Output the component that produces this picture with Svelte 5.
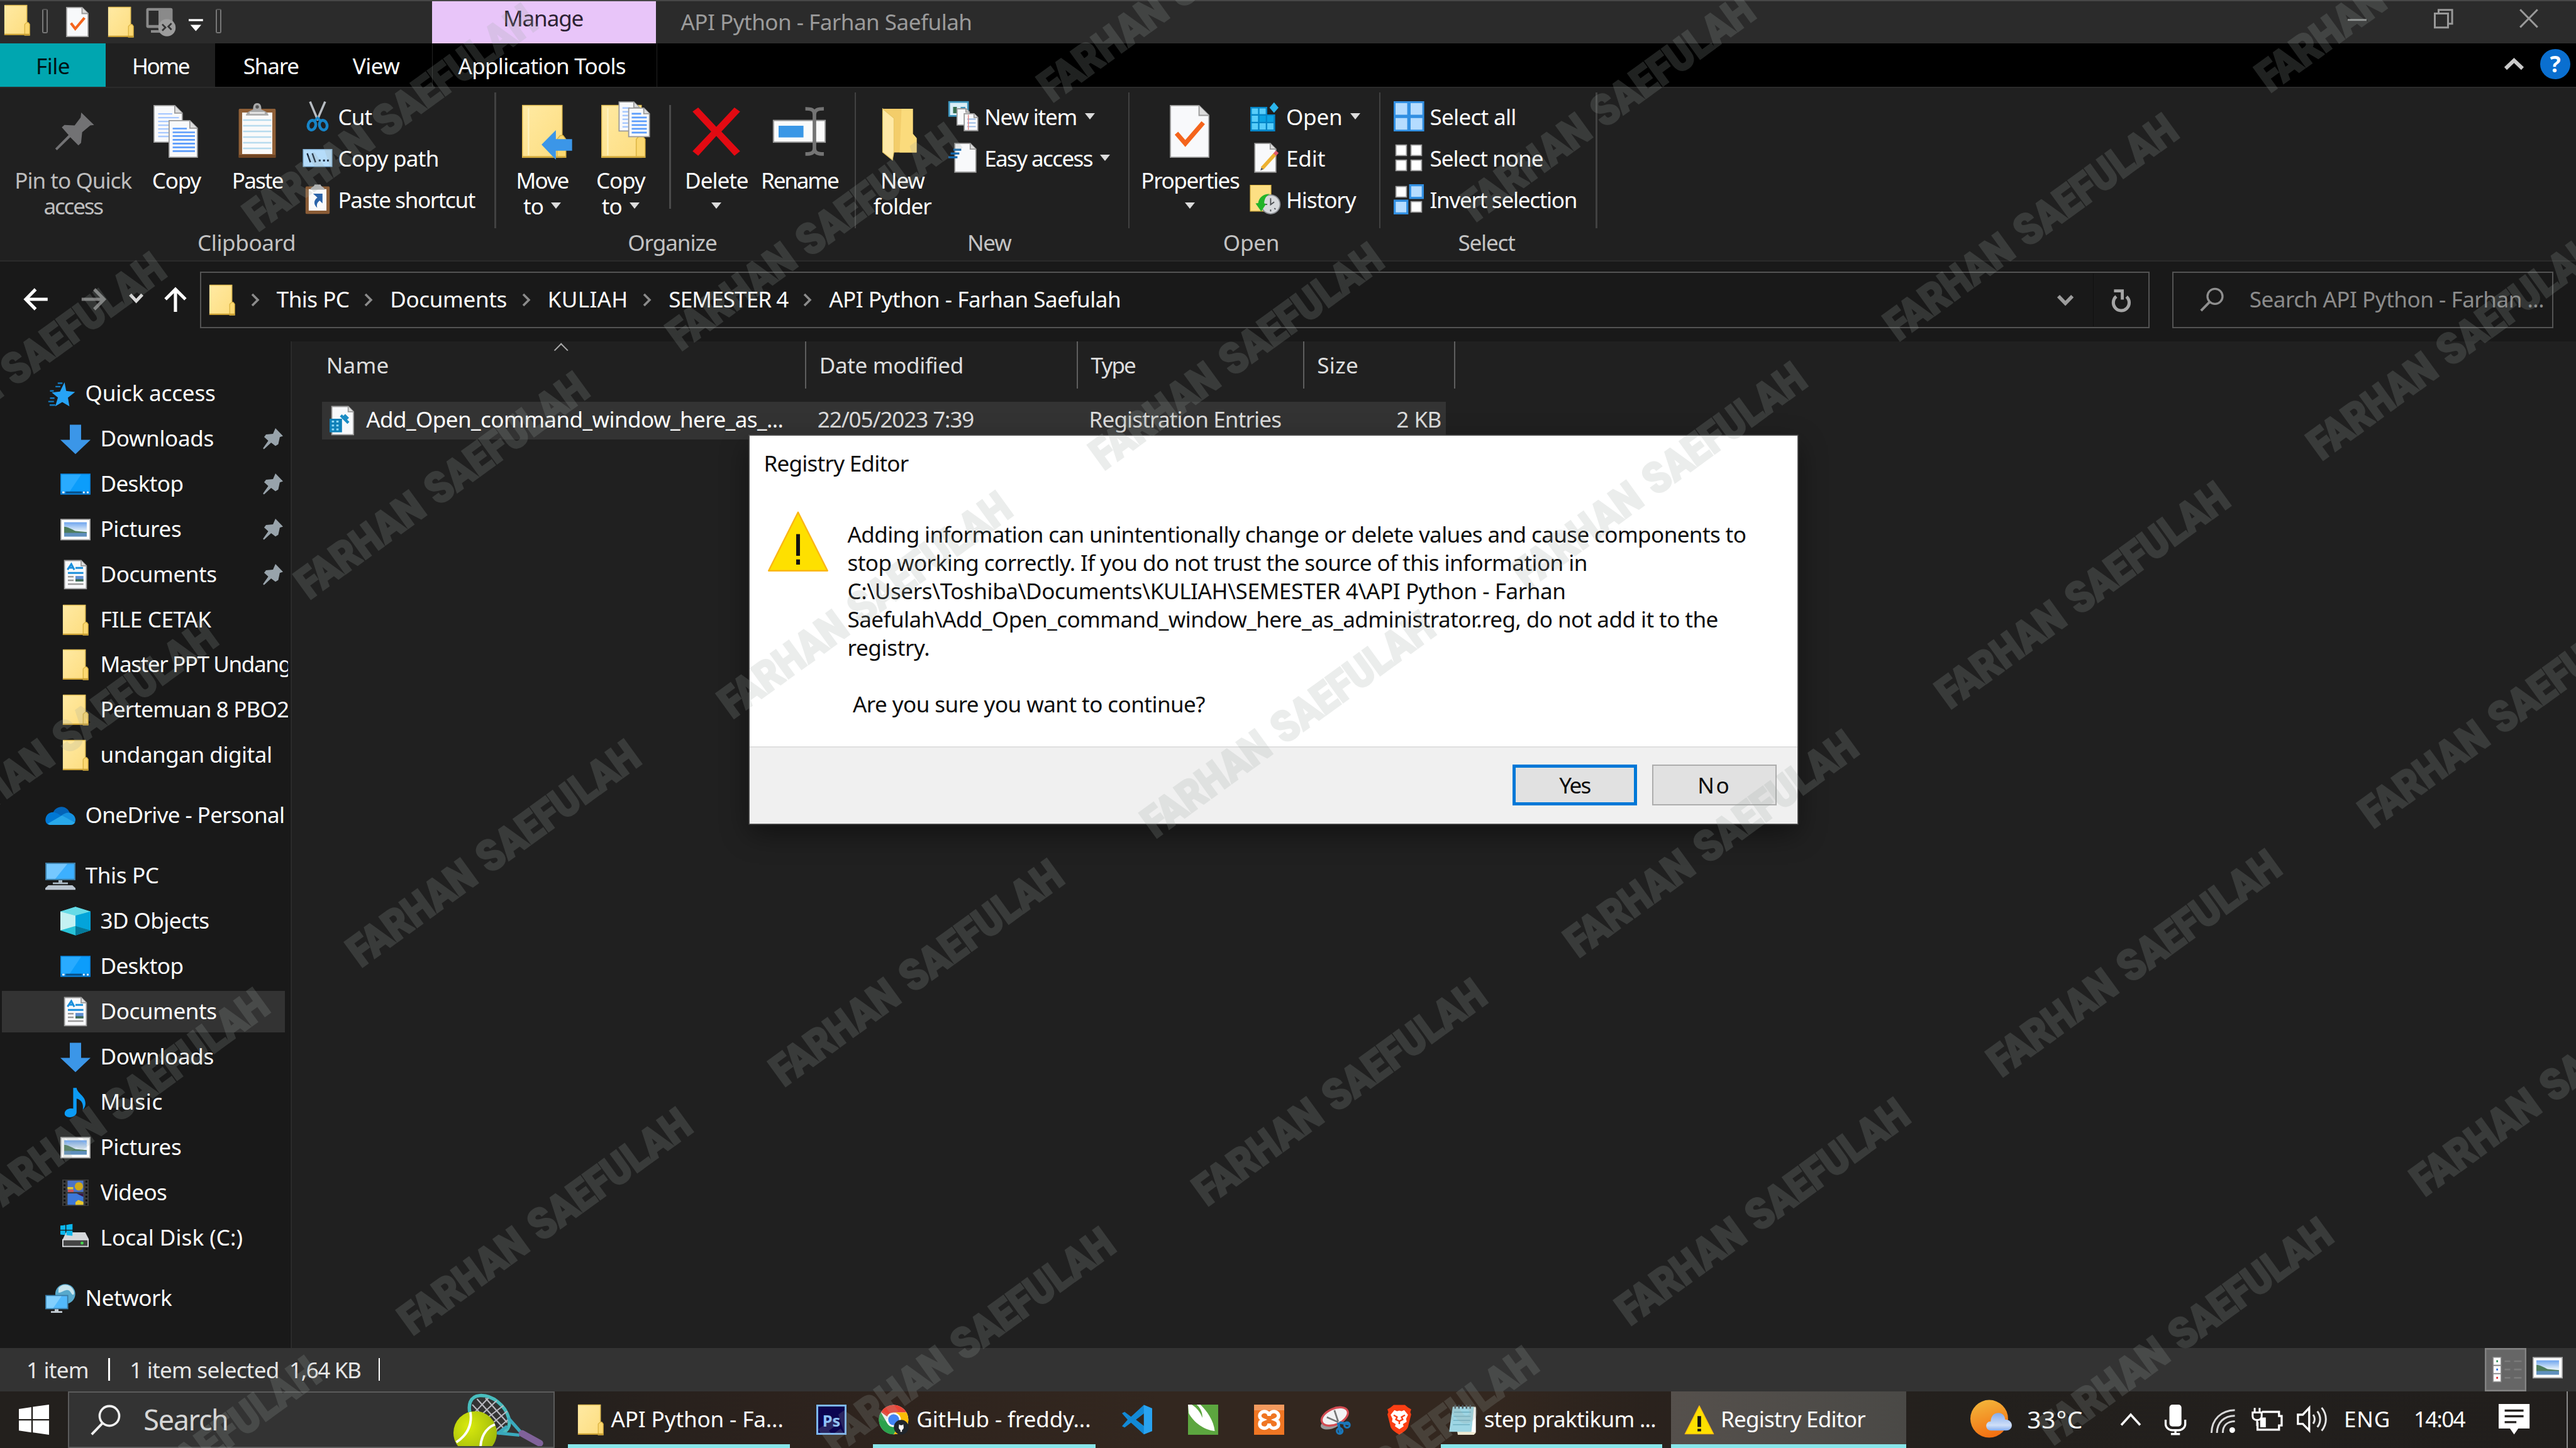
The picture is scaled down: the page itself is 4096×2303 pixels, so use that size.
<script lang="ts">
  const FONT = '"Noto Sans"';
  const ctx = document.createElement('canvas').getContext('2d')!;

  // Tracking (in em) that makes the ink of a text span the given width.
  function track(text: string, width: number, size: number) {
    ctx.font = `100px ${FONT}`;
    const m = ctx.measureText(text);
    const ink = (m.actualBoundingBoxLeft + m.actualBoundingBoxRight) / 100;
    return `${((width / size - ink) / Math.max(1, text.length - 1)).toFixed(4)}em`;
  }

  type Node = { icon: string; label: string; w: number; pin?: boolean; root?: boolean; gap?: boolean; on?: boolean };
  const tree: Node[] = [
    { icon: 'star', label: 'Quick access', w: 68, root: true },
    { icon: 'down', label: 'Downloads', w: 58.8, pin: true },
    { icon: 'desktop', label: 'Desktop', w: 42.5, pin: true },
    { icon: 'picture', label: 'Pictures', w: 41.6, pin: true },
    { icon: 'document', label: 'Documents', w: 60.4, pin: true },
    { icon: 'folder', label: 'FILE CETAK', w: 57.8 },
    { icon: 'folder', label: 'Master PPT Undangan', w: 112.5 },
    { icon: 'folder', label: 'Pertemuan 8 PBO2', w: 98.6 },
    { icon: 'folder', label: 'undangan digital', w: 89.5 },
    { icon: 'onedrive', label: 'OneDrive - Personal', w: 104.3, root: true, gap: true },
    { icon: 'pc', label: 'This PC', w: 38.8, root: true, gap: true },
    { icon: 'cube', label: '3D Objects', w: 57 },
    { icon: 'desktop', label: 'Desktop', w: 42.5 },
    { icon: 'document', label: 'Documents', w: 60.4, on: true },
    { icon: 'down', label: 'Downloads', w: 58.8 },
    { icon: 'music', label: 'Music', w: 31.6 },
    { icon: 'picture', label: 'Pictures', w: 41.6 },
    { icon: 'video', label: 'Videos', w: 35 },
    { icon: 'disk', label: 'Local Disk (C:)', w: 74 },
    { icon: 'network', label: 'Network', w: 45, root: true, gap: true },
  ];

  const crumbs: [string, number][] = [
    ['This PC', 38.4],
    ['Documents', 60.6],
    ['KULIAH', 40.4],
    ['SEMESTER 4', 63],
    ['API Python - Farhan Saefulah', 154],
  ];

  const message: [string, number][] = [
    ['Adding information can unintentionally change or delete values and cause components to', 476.2],
    ['stop working correctly. If you do not trust the source of this information in', 391],
    ['C:\\Users\\Toshiba\\Documents\\KULIAH\\SEMESTER 4\\API Python - Farhan', 379.4],
    ['Saefulah\\Add_Open_command_window_here_as_administrator.reg, do not add it to the', 460.8],
    ['registry.', 42],
  ];

  // Lattice of the diagonal watermark.
  const marks: { x: number; y: number }[] = [];
  for (let i = -3; i <= 9; i++) {
    for (let j = -3; j <= 10; j++) {
      const x = 573 + i * 821 + j * 114;
      const y = 513 - i * 549.5 + j * 813.5;
      if (x > -750 && x < 5750 && y > -100 && y < 3800) marks.push({ x, y });
    }
  }
</script>

{#snippet t(text: string, w: number, size = 11.7, cls = '')}
  <span class="t {cls}" style:font-size="{size}px" style:letter-spacing={track(text, w, size)}>{text}</span>
{/snippet}

{#snippet page(x: number, y: number, w: number, h: number, f: number)}
  <path d="M{x} {y}h{w - f}l{f} {f}v{h - f}h{-w}z" fill="#f8f9fb" stroke="#9a9a9a" stroke-width=".6" />
  <path d="M{x + w - f} {y}v{f}h{f}" fill="#dcdcdc" stroke="#9a9a9a" stroke-width=".6" />
{/snippet}

{#snippet folder(w: number, h: number)}
  <rect x="0" y="0" width={w - 1.3} height={h} fill="url(#fold)" />
  <path d="M.2 .2H{w - 1.5}V{h * 0.56}" fill="none" stroke="#e3bf55" stroke-width=".5" />
  <path d="M{w - 2.6} {h}v{-h * 0.36}l1 -{h * 0.06}h.9l.7 {h * 0.06}v{h * 0.36}z" fill="#fbd871" stroke="#dcb443" stroke-width=".45" />
  <path d="M0 {h - 0.35}H{w}" stroke="#c99f33" stroke-width=".7" />
{/snippet}

{#snippet ico(name: string, w = 16, h = 16)}
  <svg class="ico" width={w} height={h} viewBox="0 0 {w} {h}">
    {#if name === 'folder'}
      <g transform="translate({(w - 13.4) / 2} {(h - 16) / 2})">{@render folder(13.4, 16)}</g>
    {:else if name === 'star'}
      <path d="M10.2 2l.9 4.600 4.700.6-3.800 3 .8 4.600-3.800-2.300-3.700 2.300 1.400-4.700-3.300-2.700 4.400-.5z" fill="#27a3f5" />
      <path d="M6.600 2.500h2.500M5.400 4.300h2.600M2.500 6.600h2M2.500 10.400h2.400M1.600 12.200h3M2.300 14.100h3" stroke="#1479bd" stroke-width=".8" />
    {:else if name === 'down'}
      <path d="M5 .5h6v8h5l-8 7.6L0 8.5h5z" fill="#3b96e8" />
    {:else if name === 'desktop'}
      <rect x="0" y="2.4" width="16" height="11.2" fill="#0b7fd6" />
      <rect x=".5" y="2.9" width="15" height="8.9" fill="#0c9dfb" />
      <path d="M.5 2.9h10.5L5 11.8H.5z" fill="#29abff" />
      <path d="M1 12.4h1.2M12 12.4h.9M14 12.4h1" stroke="#fff" stroke-width=".9" />
      <path d="M3 12.4h8.4" stroke="#064f88" stroke-width=".9" />
    {:else if name === 'picture'}
      <rect x=".3" y="2.7" width="15.4" height="10.8" fill="#fdfdfd" stroke="#a5a5a5" stroke-width=".6" />
      <rect x="2" y="4.2" width="12" height="7.6" fill="url(#sky)" />
      <path d="M2 6.6c2 .1 4 1.4 6 2.2l6 .6v.6H2z" fill="#4e7c5c" />
      <path d="M2 9.8h12v2H2z" fill="#5f8fbd" />
    {:else if name === 'document'}
      {@render page(2.2, 0.5, 11.6, 15, 2.8)}
      <path d="M3.8 5.4l2-3 1.6 3M4.5 4.3h2.3M8 4.4h4M4 7.1h8.2" stroke="#1b8fdc" stroke-width="1" fill="none" />
      <path d="M4 9.1h3M4 11h3M4 13h8.2" stroke="#9b9b9b" stroke-width=".8" />
      <rect x="8" y="8.7" width="4.2" height="2.8" fill="#5e8fd1" />
      <rect x="8" y="10.4" width="4.2" height="1.2" fill="#3f6b55" />
    {:else if name === 'onedrive'}
      <path d="M4.2 6.5C5.3 3.4 9.4 2.3 12 4.9l1 1.6-4 4-5.5-3z" fill="#0364b8" />
      <path d="M.1 10.3c0-2.5 2.1-4.4 4.7-4 1 .2 2.2.8 4 2L2.4 13C1 12.8.1 11.800.1 10.300z" fill="#0078d4" />
      <path d="M8.400 8.200c2-1.700 4-2 5.200-1.400C15.200 7.500 16 9 16 10.200c0 .6-.1 1-.3 1.500z" fill="#1490df" />
      <path d="M1.300 12.300L8.800 8l7 3.700c-.5.900-1.300 1.300-2.400 1.300H3c-.8 0-1.300-.3-1.700-.7z" fill="#28a8ea" />
    {:else if name === 'pc'}
      <rect x="0" y="1" width="16" height="9.300" fill="#3e7fa8" />
      <rect x=".7" y="1.700" width="14.600" height="7.900" fill="#3cb0ff" />
      <path d="M.7 1.700h11L5.300 9.600H.7z" fill="#76c8ff" />
      <path d="M7 10.300h2v1.200h3v.9H4v-.9h3z" fill="#a9b7c2" />
      <path d="M1.600 13h12.800l1.600 1.500v.9H0v-.9z" fill="#b9c4cf" />
    {:else if name === 'cube'}
      <path d="M8 .4l8 2.500v10L8 15.600 0 12.900v-10z" fill="#29c3d8" />
      <path d="M0 2.900l8-2.500 8 2.500-8 2.200z" fill="#67dbe6" />
      <path d="M0 2.900l8 2.200v5.500l-8 2.300z" fill="#c4f1f2" />
      <path d="M8 5.100l8-2.200v10l-8-2.300z" fill="#03a4da" />
      <path d="M8 10.600l8 2.300-8 2.700z" fill="#04799b" />
    {:else if name === 'music'}
      <path d="M6.800.4h1.800c.4 3 4.800 4.200 4.700 8.300 0 1.200-.5 2.400-1.400 3.400.4-2.800-.3-5.200-3.300-6v7c0 1.800-1.600 2.900-3.600 2.900-1.700 0-3-.9-2.700-2.400.3-1.700 2.300-2.600 4.500-2.200z" fill="#0c9bf5" />
    {:else if name === 'video'}
      <rect x="1" y="1" width="14" height="14" fill="#3c3c3c" />
      <path d="M2.200 1.600v13M13.800 1.600v13" stroke="#0f0f0f" stroke-width="1" stroke-dasharray="1 1" />
      <rect x="3.800" y="1.600" width="8.400" height="6" fill="#4c74c8" />
      <rect x="3.800" y="8.400" width="8.400" height="6" fill="#3d78d8" />
      <circle cx="9.800" cy="4.600" r="2.200" fill="#d0a91b" />
      <path d="M3.800 5h3v1.200h-3zM8 13l1.500-1.200 2.700 1v1.600H8z" fill="#e8c72c" />
      <path d="M4 6.400h3v1.200H4z" fill="#d9544d" />
      <path d="M8.600 8.400h3.600v1.800z" fill="#3a1640" />
    {:else if name === 'disk'}
      <path d="M0 1.500l2.600-.3v2.400H0zM3.200 1.100L6.400.6v3H3.200zM0 4.200h2.600v2.200L0 6.100zM3.200 4.200h3.200v3L3.200 6.700z" fill="#0cb7ee" />
      <path d="M3 5h10.200l2 3.800H1.200z" fill="#d5d7da" />
      <path d="M0 1.500l2.600-.3v2.400H0zM3.200 1.100L6.400.6v3H3.200zM0 4.200h2.600v2.200L0 6.100zM3.200 4.200h3.200v2.600L3.200 6.500z" fill="#0cb7ee" />
      <rect x="1" y="8.600" width="14" height="4.200" fill="#e1e3e6" />
      <rect x="1.600" y="9.200" width="12.800" height="3" fill="#444" />
      <circle cx="11.500" cy="10.700" r=".8" fill="#45d64a" />
    {:else if name === 'network'}
      <circle cx="10.600" cy="5.700" r="5.300" fill="#58a9cc" />
      <path d="M7 2.600c2-2.400 6-2.600 8 1.200.6 1.400.2 2.600-.6 2.200-1-1-1.400-2.600-3-2.400-2 .3-2.800 1.500-4.400 1.400z" fill="#c8e5ee" />
      <rect x="0" y="6.200" width="12.200" height="7.600" fill="#3a7ca6" />
      <rect x=".6" y="6.800" width="11" height="6.400" fill="#52b9fb" />
      <path d="M.6 6.800h8l-4.400 6.400H.6z" fill="#82cffd" />
      <path d="M5 13.800h2v1h2v.9H3v-.9h2z" fill="#c3ccd3" />
    {:else if name === 'pin'}
      <path d="M7 .3l4 4.200-1.700.6-.8 3.700-1.500 1L4.700 8 .9 11.500.4 11l2.800-4L1 5l1-1.300 3.700-.4z" fill="#98a3ab" />
    {:else if name === 'props'}
      {@render page(0.300, 0.300, 11.400, 15.400, 3.200)}
      <path d="M2.600 8.600l2.300 3 4.900-5.800" fill="none" stroke="#f4641c" stroke-width="1.400" />
    {:else if name === 'rdp'}
      <rect x=".5" y=".6" width="14" height="10.600" rx="1" fill="#8a8a8a" />
      <rect x="1.800" y="2" width="5.200" height="7.600" fill="#2b2b2b" />
      <path d="M3 13h7" stroke="#8a8a8a" stroke-width="1.400" />
      <circle cx="11.500" cy="11" r="4.600" fill="#9c9c9c" />
      <path d="M9 9.200l1.700 1.700L9 12.600M13.900 8.700l-1.700 1.700 1.700 1.700" fill="none" stroke="#333" stroke-width=".9" />
    {:else if name === 'bigpin'}
      <path d="M20.400 6l6.800 6.600-2 .2-4.300 3.600-.6 5.700-1.400 1.300-4.300-4.300-7.100 6.900-.9-.9 7.100-7.200-3.600-4.100 1.400-1.200 5.400.2 3.200-4.200z" fill="#727274" />
    {:else if name === 'copy'}
      {@render page(4.300, 2.300, 15, 19.400, 4)}
      <path d="M6.500 6.700h7.500M6.500 8.700h11M6.500 10.700h6M6.500 12.700h6M6.500 14.700h6M6.500 16.700h6M6.500 18.700h6" stroke="#a8c9ff" stroke-width=".8" />
      {@render page(12.300, 10.300, 15, 19.400, 4)}
      <path d="M14.200 14.500h7.500M14.200 16.500h11.800M14.200 18.500h11.800M14.200 20.500h11.800M14.200 22.500h11.800M14.200 24.500h11.800M14.200 26.500h11.800" stroke="#5c9dfc" stroke-width=".9" />
    {:else if name === 'paste'}
      <rect x="6.200" y="4" width="19.600" height="26" rx=".6" fill="#8f5f37" />
      <path d="M6.200 28.400h19.600v1.600H6.200z" fill="#6f4524" />
      <rect x="8" y="6" width="16" height="22" fill="#fafafa" />
      <path d="M8.500 10h15M8.500 13h15M8.500 16h15M8.500 19h15M8.500 22h15M8.500 25h15" stroke="#b7dbee" stroke-width=".8" />
      <path d="M10 7.600c.2-1.800 1.600-2.200 3.800-3.200 0-1.400.2-3.400 2.200-3.400s2.200 2 2.200 3.400c2.200 1 3.600 1.400 3.800 3.200z" fill="#a9a9a9" />
      <path d="M12 6.200h8" stroke="#e4e4e4" stroke-width="1" />
      <circle cx="16" cy="3" r=".9" fill="#555" />
    {:else if name === 'cut'}
      <path d="M4 .2l4.200 10M12 .2L7.800 10" stroke="#b7bcc2" stroke-width="1.200" />
      <ellipse cx="5" cy="12.700" rx="2" ry="2.600" fill="none" stroke="#1784c7" stroke-width="1.500" transform="rotate(15 5 12.700)" />
      <ellipse cx="11" cy="12.700" rx="2" ry="2.600" fill="none" stroke="#1784c7" stroke-width="1.500" transform="rotate(-15 11 12.700)" />
      <path d="M6.200 10.600L8 8.800l1.800 1.800" fill="none" stroke="#1784c7" stroke-width="1.300" />
    {:else if name === 'path'}
      <rect x=".4" y="3.600" width="15.200" height="9" fill="#b5dcfa" stroke="#8ab9de" stroke-width=".5" />
      <path d="M2.500 5.600l1.700 4.800M5.200 5.600l1.700 4.800" stroke="#15253a" stroke-width=".8" />
      <path d="M8.600 9.400h1M10.900 9.400h1M13 9.400h1" stroke="#15253a" stroke-width="1" />
    {:else if name === 'pasteshort'}
      <rect x="1.600" y="1.200" width="12.800" height="14.600" rx=".6" fill="#8a5c36" />
      <rect x="3.300" y="2.600" width="9.400" height="11.400" fill="#fafafa" />
      <path d="M4.200 2.900c.4-1.600 2-1.400 2.200-2.700h3.200c.2 1.300 1.800 1.100 2.200 2.700z" fill="#b5b5b5" />
      <path d="M5.600 5h5v5.200l-1.500-1.500c-1.500 1.200-1.700 2.200-1.300 3.800-2-1.600-2-4 .1-5.400z" fill="#2c64a9" />
    {:else if name === 'moveto' || name === 'copyto'}
      <g transform="translate(2.100 0)">
        <g transform="translate(3.500 2.200)">
          <rect width="21" height="27.600" fill="url(#fold)" stroke="#e3bf55" stroke-width=".5" />
          <path d="M3.200 1.500v25" stroke="#fff2bd" stroke-width=".8" />
          <path d="M18.300 27.600V18l1.700-2h1.500l1.500 2v9.600z" fill="#fbd871" stroke="#dcb443" stroke-width=".5" />
          <path d="M0 27.300h23" stroke="#d2a93c" stroke-width=".8" />
        </g>
        {#if name === 'moveto'}
          <path d="M13.600 23l7.600-7.700v4.800h8.600v6.200h-8.600V31z" fill="#3b96e8" />
        {:else}
          {@render page(12.700, 0.400, 10.800, 15.400, 3)}
          <path d="M14.500 3.600h4M14.500 5.600h4M14.500 7.600h3M14.500 9.600h3M14.500 11.600h3M14.500 13.600h3" stroke="#a8c9ff" stroke-width=".8" />
          {@render page(17.800, 3.600, 11, 15.200, 3)}
          <path d="M19.400 6.600h5M19.400 8.600h8M19.400 10.600h8M19.400 12.600h8M19.400 14.600h8M19.400 16.600h8" stroke="#5c9dfc" stroke-width=".9" />
        {/if}
      </g>
    {:else if name === 'delete'}
      <path d="M3.400 5.500l3-2.200L16 13.600l9.600-10.300 3 2.200-9.900 10.600 9.900 10.400-3 2.400L16 18.400 6.400 28.900l-3-2.400 9.900-10.400z" fill="#e20a12" />
    {:else if name === 'rename'}
      <rect x="2.300" y="10.200" width="27.400" height="11.500" fill="#fbfbfb" stroke="#9b9b9b" stroke-width=".7" />
      <rect x="5" y="13" width="13.200" height="6.200" fill="#3a97e6" />
      <path d="M19.200 4c3 0 4.800.4 4.800 3v18c0 2.600-1.800 3-4.800 3M29 4c-3 0-5 .4-5 3v18c0 2.600 2 3 5 3" fill="none" stroke="#747474" stroke-width="1.900" />
    {:else if name === 'newfolder'}
      <g transform="translate(-1.500 0)">
        <path d="M7 4h16v13.300l2 2.300v7.600H7z" fill="#f3cd6a" />
        <path d="M17 4h6v13.300l2 2.300v7.600h-9z" fill="#fbdb7c" />
        <path d="M7 4l6 5v17.500l-.8 4.700L7 27z" fill="#ffe9a6" stroke="#e9c766" stroke-width=".4" />
      </g>
    {:else if name === 'newitem'}
      <rect x=".4" y=".4" width="10" height="7.400" fill="#d9eef7" stroke="#3b94bd" stroke-width=".9" />
      <path d="M2.500 6.400V3h2v3.400z" fill="#376d50" />
      <path d="M6.500 3h2.500v2H6.500z" fill="#3b94bd" />
      {@render page(4.600, 4, 6.500, 8.600, 1.800)}
      {@render page(8.400, 6.600, 7.200, 9, 2)}
      <path d="M10 9.500h4.500M10 11.500h4.500M10 13.500h4.500" stroke="#97b9e4" stroke-width=".6" />
      <path d="M10.600 7.200v8" stroke="#e88c8c" stroke-width=".5" />
    {:else if name === 'easy'}
      {@render page(3.400, 0.400, 11.200, 15.200, 3)}
      <path d="M2.600 3.700h4.200M1.200 5.700h4.600M0 7.700h4.800" stroke="#1368ae" stroke-width="1.100" />
    {:else if name === 'bigprops'}
      <g transform="translate(-.8 0)">
        {@render page(5.800, 2.300, 20.400, 27.400, 5.200)}
        <path d="M9 17l4.700 5.400 9.500-11" fill="none" stroke="#f4641c" stroke-width="2.400" />
      </g>
    {:else if name === 'regedit'}
      <path d="M0 3h9v4h4.200v9H0z" fill="#0586c8" />
      <path d="M.8 3.800h3.300v3H.8zM4.900 3.800h3.300v3H4.900zM.8 7.700h3.300v3.200H.8zM.8 11.700h3.300v3.300H.8zM4.900 11.700h3.300v3.300H4.900zM9 11.700h3.300v3.300H9z" fill="#58cdfa" />
      <path d="M4.900 7.700h3.300v3.200H4.900zM9 7.700h3.300v3.200H9z" fill="#0aa2e2" />
      <path d="M12.600.6L15 3.400l-2.400 2.800-2.400-2.800z" fill="#2bb5ec" />
    {:else if name === 'edit'}
      {@render page(2.400, 0.400, 11.200, 15.200, 3)}
      <path d="M6.300 13.600L13.200 6" stroke="#edb131" stroke-width="1.900" />
      <path d="M13 6.300l1.300-1.500" stroke="#e0596b" stroke-width="2" />
      <path d="M5.400 14.800l.4-1.500 1.200.7z" fill="#555" />
    {:else if name === 'history'}
      <path d="M0 .5h11v13.800H0z" fill="#fddf83" stroke="#dcb443" stroke-width=".4" />
      <circle cx="10.800" cy="10.700" r="5" fill="#d6d9dc" stroke="#8b8f94" stroke-width=".6" />
      <path d="M10.800 7.400v3.400l1.900-1.400M8 10.700h1M12.800 12.700l.6.600M10.800 13.400v1" stroke="#4a4d51" stroke-width=".6" fill="none" />
      <path d="M10.400 5.200c-2.200 1-3 3-3 5l1 .2-2.600 4-3-4.200 1.400-.2c.4-3 3-5 6.200-4.800z" fill="#22b42a" />
    {:else if name === 'selall'}
      <rect width="16.200" height="16" fill="#318fe2" />
      <path d="M1 1h6.200v6.200H1zM9 1h6.200v6.200H9zM1 8.900h6.200v6.200H1zM9 8.900h6.200v6.200H9z" fill="#b5dcff" />
    {:else if name === 'selnone'}
      <path d="M1.200 1.200h5.600v5.600H1.200zM9.200 1.200h5.600v5.600H9.200zM1.200 9.200h5.600v5.600H1.200zM9.200 9.200h5.600v5.600H9.200z" fill="#fff" stroke="#9c9c9c" stroke-width=".6" />
    {:else if name === 'selinv'}
      <path d="M1.200 1.200h5.600v5.600H1.200zM9.200 9.200h5.600v5.600H9.200z" fill="#fff" stroke="#9c9c9c" stroke-width=".6" />
      <path d="M8.200 0h7.800v7.800H8.200zM0 8.200h7.800V16H0z" fill="#318fe2" />
      <path d="M9.300 1.100h5.600v5.600H9.300zM1.100 9.300h5.600v5.600H1.100z" fill="#b5dcff" />
    {:else if name === 'back'}
      <path d="M7.200 1.700L2 7l5.200 5.300M2 7h11.600" fill="none" stroke="#fff" stroke-width="1.700" />
    {:else if name === 'forward'}
      <path d="M8.300 1.700L13.500 7l-5.200 5.300M13.500 7H1.600" fill="none" stroke="#7b7b7b" stroke-width="1.700" />
    {:else if name === 'up'}
      <path d="M1.700 7L7 1.700 12.300 7M7 1.700v12" fill="none" stroke="#fff" stroke-width="1.700" />
    {:else if name === 'chevdown'}
      <path d="M1 1.500l3.200 3.400 3.200-3.400" fill="none" stroke="#d8d8d8" stroke-width="1.700" />
    {:else if name === 'addrchev'}
      <path d="M1 2l3.700 3.800L8.400 2" fill="none" stroke="#9c9c9c" stroke-width="1.900" />
    {:else if name === 'chevup'}
      <path d="M1 6l4.500-4.300L10 6" fill="none" stroke="#c9c9c9" stroke-width="2" />
    {:else if name === 'crumb'}
      <path d="M1 1l3 3-3 3" fill="none" stroke="#8b8b8b" stroke-width="1.200" />
    {:else if name === 'refresh'}
      <path d="M3 4.200A4.200 4.200 0 1 0 8.400 4.300" fill="none" stroke="#a5a5a5" stroke-width="1.700" />
      <path d="M1.800 1.200h4.400v4.600" fill="none" stroke="#a5a5a5" stroke-width="1.600" />
    {:else if name === 'glass'}
      <circle cx="8" cy="4.800" r="4" fill="none" stroke="#8f8f8f" stroke-width="1.100" />
      <path d="M5.200 7.700L.6 12.400" stroke="#8f8f8f" stroke-width="1.300" />
    {:else if name === 'regfile'}
      {@render page(2.200, 0.500, 11.500, 15, 2.800)}
      <rect x="1" y="7" width="6.600" height="7.200" fill="#0f80b8" />
      <path d="M2.200 8.500h1.200M4.600 8.500h1.200M2.200 10.600h1.200M4.600 10.600h1.200M2.200 12.700h1.200M4.600 12.700h1.200" stroke="#8fd8f6" stroke-width="1" />
      <path d="M7 5.200l4 4M8.800 5l2 2" stroke="#1b8cc4" stroke-width="1.500" />
    {:else if name === 'warn'}
      <path d="M{w / 2} .6L{w - 0.4} {h - 0.4}H.4z" fill="#fee000" stroke="#fbb615" stroke-width={w / 40} stroke-linejoin="round" />
      <path d="M{w / 2} {h * 0.38}v{h * 0.36}M{w / 2} {h * 0.8}v{h * 0.085}" stroke="#111" stroke-width={w > 20 ? 2 : 1.9} />
    {:else if name === 'win'}
      <path d="M0 2.300L6.600 1.300v6.400H0zM7.400 1.200L16 0v7.700H7.400zM0 8.400h6.600v6.400L0 13.800zM7.400 8.400H16V16l-8.600-1.200z" fill="#fff" />
    {:else if name === 'search'}
      <circle cx="10" cy="6" r="5.200" fill="none" stroke="#f0f0f0" stroke-width="1.200" />
      <path d="M6.300 9.900L.6 15.800" stroke="#f0f0f0" stroke-width="1.300" />
    {:else if name === 'tennis'}
      <path d="M9.500 13C7 6 9 1.500 14 1.200c7-.4 13.500 5.500 15.300 11.800 1.300 4.500-.8 8-5.300 8.200" fill="none" stroke="#48bcbd" stroke-width="1.800" />
      <path d="M10 6l13 14M12.500 3l15 16.500M17 2.500l11.500 13M10 11.500l8.500-9M11.500 14.500L23 3.800M16 14.500l10.500-8M20.500 16l8-6.500M22.500 19.500l7-6" stroke="#b9b9c0" stroke-width=".7" />
      <path d="M29 13l6.600 7.500M23 21l12 1.200M28.500 17.500l-4.800 3.700" stroke="#3aa9bd" stroke-width="1.700" fill="none" />
      <path d="M36.400 21.300l9.400 5.200" stroke="#80629a" stroke-width="3.600" stroke-linecap="round" />
      <circle cx="11.500" cy="21" r="11.500" fill="url(#ball)" />
      <path d="M9 10c1 6.500-1.500 12-7.500 16M22 16.500c-5 2-8 7-7.600 14" fill="none" stroke="#fff" stroke-width="1.300" />
    {:else if name === 'ps'}
      <rect x=".5" y=".5" width="15" height="15" fill="#0c0450" stroke="#7db8f5" stroke-width="1" />
      <text x="8" y="11.600" text-anchor="middle" class="pstext">Ps</text>
    {:else if name === 'chrome'}
      <circle cx="8" cy="8" r="7.800" fill="#fff" />
      <path d="M8 .2a7.800 7.800 0 0 1 6.800 4H8a3.900 3.900 0 0 0-3.500 2.100L1.300 4A7.800 7.800 0 0 1 8 .2z" fill="#ea4335" />
      <path d="M14.800 4.200A7.800 7.800 0 0 1 8 15.800l3.400-5.900A3.900 3.900 0 0 0 8 4.200z" fill="#fbbc05" />
      <path d="M1.200 4.100A7.800 7.800 0 0 0 8 15.800l3.400-5.900a3.900 3.900 0 0 1-6.800 0z" fill="#2ba24c" />
      <circle cx="8" cy="8" r="3.600" fill="#fff" />
      <circle cx="8" cy="8" r="2.900" fill="#4285f4" />
      <circle cx="12" cy="12" r="3.900" fill="#20252b" />
      <path d="M10.900 10.400l.6.500h1l.6-.5.200 1.700c0 .8-.5 1.200-.9 1.300v1h-.8v-1c-.5-.1-.9-.6-.9-1.300z" fill="#fff" />
    {:else if name === 'vscode'}
      <path d="M11.600.2L16 2v12l-4.400 1.800L4.800 9.600 1.400 12.200 0 11.400 3 8 0 4.600l1.400-.8 3.400 2.600zM11.800 4.600L7.400 8l4.400 3.400z" fill="#1289d6" fill-rule="evenodd" />
      <path d="M11.600.2L16 2v12l-4.400 1.800z" fill="#29a3f0" />
    {:else if name === 'corel'}
      <rect width="16" height="16" fill="#5ca63f" />
      <path d="M0 0h2c2.600 1.600 4.600 4 5.600 7C7.800 4 6.400 1.600 4.600 0h2c3.600 3.600 7 8.400 7.600 14C8.600 13.600 3 9.400.4 4.600z" fill="#fff" />
    {:else if name === 'xampp'}
      <rect width="16" height="16" fill="#f07623" />
      <rect width="16" height="3" fill="#f39a5e" />
      <path d="M4.400 3.900C2.400 5 2.600 7.200 4.600 8c-2 .8-2.200 3.400-.2 4.300 2 .7 3.600-.6 3.600-2.300 0 1.700 1.600 3 3.600 2.300 2-.9 1.800-3.500-.2-4.300 2-.8 2.200-3 .2-4.100C9.800 3.200 8 4.400 8 6c0-1.600-1.600-2.800-3.600-2.100z" fill="none" stroke="#fff" stroke-width="1.800" />
    {:else if name === 'snip'}
      <ellipse cx="5.600" cy="10.300" rx="5.400" ry="2.600" fill="#9a9a9c" transform="rotate(-15 5.600 10.300)" />
      <ellipse cx="7.800" cy="6.300" rx="7.400" ry="4.200" fill="#f2f2f4" stroke="#d34b52" stroke-width="1.100" transform="rotate(-24 7.800 6.300)" />
      <path d="M7.600 3l2 6M3.600 6.700l6 2.600" stroke="#777" stroke-width=".9" />
      <path d="M9.600 9.600l1.200 5.600M10.200 9.500l5 .8" stroke="#1b76b8" stroke-width="1.400" />
      <circle cx="10.400" cy="14" r="1.500" fill="none" stroke="#1b76b8" stroke-width="1.100" />
      <circle cx="14.300" cy="10.800" r="1.400" fill="none" stroke="#1b76b8" stroke-width="1.100" />
    {:else if name === 'brave'}
      <path d="M4 .2h6l1.600 1.300 1.700 1-.5 1.500.5 1.200-1.700 6.600c-.6 1.700-2.800 3-4.600 4.100-1.800-1.100-4-2.400-4.600-4.100L.7 5.200l.5-1.200-.5-1.500 1.700-1z" fill="#fb3f14" />
      <path d="M7 3.200l1.200.3 1.400-.6 2 2.500-1 2.100.3 1.600-2 1.200.4 1.200L7 13l-2.300-1.500.4-1.200-2-1.200.3-1.600-1-2.100 2-2.500 1.400.6z" fill="#fff" />
      <path d="M4 5.600l1.800 1-.6 1.300 1.800.9 1.800-.9-.6-1.300 1.800-1M7 8.800v1.500" stroke="#fb3f14" stroke-width=".8" fill="none" />
    {:else if name === 'notepad'}
      <path d="M2.500 1.200h12V15l-1 1H5z" fill="#efe9d2" />
      <path d="M2.300 1.200h11.200L12.400 14.400H.4z" fill="#9ed6e4" />
      <path d="M3 4h9M2.800 6.200h9M2.600 8.400h9M2.400 10.600h9" stroke="#78b7c8" stroke-width=".6" />
      <path d="M3.600.2v2M5.600.2v2M7.600.2v2M9.600.2v2M11.600.2v2" stroke="#4b565c" stroke-width=".8" />
      <path d="M12.200 14.600l1.500-13h.8v13z" fill="#fff" />
    {:else if name === 'weather'}
      <circle cx="10" cy="10.200" r="10" fill="url(#sun)" />
      <path d="M11 16.400c-3.400 0-3.400-4.800-.2-4.800.2-3.400 2.200-4.600 4.200-4.500 2.200.1 3.400 1.700 3.400 3.500 4.600 0 4.800 5.800.6 5.800z" fill="url(#cloud)" />
    {:else if name === 'traychev'}
      <path d="M1 7.500l5-5.500 5 5.500" fill="none" stroke="#f5f5f5" stroke-width="1.200" />
    {:else if name === 'mic'}
      <rect x="2.500" y="0" width="6.400" height="11.600" rx="1.600" fill="#fff" />
      <path d="M.5 8v2.400c0 1.600 1.600 3.200 3.600 3.200h3.200c2 0 3.600-1.600 3.600-3.200V8M5.700 13.600v1.900M3.300 15.600h4.800" fill="none" stroke="#fff" stroke-width="1.100" />
    {:else if name === 'wifi'}
      <circle cx="11.800" cy="11.500" r="1.500" fill="#fff" />
      <path d="M.8 13C1 5.600 6 1.100 13.200.9M3.700 13c.1-5.600 3.700-9 9.500-9.100M6.800 13c0-3.900 2.400-6.100 6.400-6.200" fill="none" stroke="#d8d8d8" stroke-width="1" />
    {:else if name === 'battery'}
      <path d="M5.600 2.500h9v2.200H16v5h-1.400V12H3.200V8" fill="none" stroke="#fff" stroke-width="1.100" />
      <path d="M1.700.4v2M4.300.4v2M.6 2.800h4.800v2C5.400 6 4.500 6.800 3 6.800S.6 6 .6 4.800zM3 6.800V10" fill="none" stroke="#fff" stroke-width="1" />
      <path d="M4.600 5.500h3v5.200h-3z" fill="#fff" />
    {:else if name === 'volume'}
      <path d="M.6 5h2.600L6.600 1.400v12L3.200 9.900H.6z" fill="none" stroke="#fff" stroke-width="1.100" />
      <path d="M8.700 5c1 1.500 1 3.300 0 4.800M10.900 3.200c2 2.600 2 5.800 0 8.400M13.200 1.300c3 3.700 3 8.500 0 12.200" fill="none" stroke="#e5e5e5" stroke-width="1" />
    {:else if name === 'notif'}
      <path d="M0 0h16.400v13h-6L8.200 16.200 6 13H0z" fill="#fff" />
      <path d="M3.200 3.500h10M3.200 6.500h10M3.200 9.600h6.200" stroke="#24211e" stroke-width="1.100" />
    {:else if name === 'details'}
      <path d="M4.400 4.900h4.200v4.200H4.400zM4.400 9.300h4.200v4.200H4.400zM4.400 13.700h4.200v4.200H4.400z" fill="#fff" stroke="#8d8d8d" stroke-width=".5" />
      <path d="M6.100 7h.9" stroke="#2e8b57" stroke-width="1" /><path d="M6.100 11.400h.9" stroke="#2a6fdb" stroke-width="1" /><path d="M6.100 15.800h.9" stroke="#d33" stroke-width="1" />
      <path d="M10.500 7h3M15.500 7h4M10.500 11.400h3M15.500 11.400h4M10.500 15.800h3M15.500 15.800h4" stroke="#7a7a7a" stroke-width=".9" />
    {:else if name === 'min'}
      <path d="M0 5.900h10" stroke="#8f9291" stroke-width="1" />
    {:else if name === 'restore'}
      <path d="M.5 2.500h7v7.400h-7zM2.500 2.500V.6h7.200v7.300H7.500" fill="none" stroke="#999" stroke-width="1" />
    {:else if name === 'close'}
      <path d="M.4.400l9.200 9.400M9.600.400L.4 9.800" stroke="#999" stroke-width="1" />
    {:else if name === 'qat'}
      <path d="M0 1h7.600" stroke="#fff" stroke-width="1.100" /><path d="M.9 3.500h5.800L3.800 6.800z" fill="#fff" />
    {/if}
  </svg>
{/snippet}

{#snippet arrow()}<i class="arrow"></i>{/snippet}

{#snippet big(icon: string, l1: string, w1: number, cls = '', l2 = '', w2 = 0, drop = false)}
  <div class="big {cls}">
    {@render ico(icon, 32, 32)}
    <div class="line">{@render t(l1, w1)}</div>
    <div class="line second">
      {#if l2}{@render t(l2, w2)}{/if}
      {#if drop}{@render arrow()}{/if}
    </div>
  </div>
{/snippet}

{#snippet small(icon: string, label: string, w: number, drop = false)}
  <div class="small">
    {@render ico(icon, 16, 16)}
    {@render t(label, w)}
    {#if drop}{@render arrow()}{/if}
  </div>
{/snippet}

<svg class="defs" width="0" height="0">
  <defs>
    <linearGradient id="fold" x1="0" y1="0" x2="1" y2="1"><stop offset="0" stop-color="#ffeaa3" /><stop offset="1" stop-color="#fddd80" /></linearGradient>
    <linearGradient id="sky" x1="0" y1="0" x2="0" y2="1"><stop offset="0" stop-color="#6ea4ee" /><stop offset=".6" stop-color="#e2effa" /></linearGradient>
    <radialGradient id="ball" cx=".35" cy=".35" r=".7"><stop offset="0" stop-color="#d9ea0d" /><stop offset="1" stop-color="#9fb90b" /></radialGradient>
    <linearGradient id="sun" x1=".3" y1="0" x2=".6" y2="1"><stop offset="0" stop-color="#f3b53a" /><stop offset="1" stop-color="#f36d10" /></linearGradient>
    <linearGradient id="cloud" x1="0" y1="0" x2="0" y2="1"><stop offset="0" stop-color="#84abee" /><stop offset=".7" stop-color="#cfdff8" /><stop offset="1" stop-color="#86aef0" /></linearGradient>
  </defs>
</svg>

<div class="screen">
  <header class="titlebar">
    <div class="qat">
      {@render ico('folder', 14, 16)}
      <i class="grip"></i>
      <span class="q1">{@render ico('props', 12, 16)}</span>
      <span class="q2">{@render ico('folder', 14, 16)}</span>
      <span class="q3">{@render ico('rdp', 16, 16)}</span>
      <span class="q4">{@render ico('qat', 8, 8)}</span>
      <i class="grip last"></i>
    </div>
    <div class="manage">{@render t('Manage', 41.3)}</div>
    <div class="wintitle">{@render t('API Python - Farhan Saefulah', 153.700)}</div>
    <div class="controls">
      {@render ico('min', 10, 10)}
      {@render ico('restore', 10, 10)}
      {@render ico('close', 10, 10)}
    </div>
  </header>

  <nav class="tabs">
    <div class="tab file">{@render t('File', 16.6)}</div>
    <div class="tab home">{@render t('Home', 29.300)}</div>
    <div class="tab share">{@render t('Share', 28.700)}</div>
    <div class="tab view">{@render t('View', 25)}</div>
    <div class="tab tools">{@render t('Application Tools', 88.600)}</div>
    <div class="tabend">
      {@render ico('chevup', 11, 8)}
      <span class="help">?</span>
    </div>
  </nav>

  <section class="ribbon">
    <div class="group clipboard">
      <div class="body">
        {@render big('bigpin', 'Pin to Quick', 61.300, 'dim pinq', 'access', 31)}
        {@render big('copy', 'Copy', 25.500)}
        {@render big('paste', 'Paste', 26)}
        <div class="col">
          {@render small('cut', 'Cut', 17.300)}
          {@render small('path', 'Copy path', 52)}
          {@render small('pasteshort', 'Paste shortcut', 71.700)}
        </div>
      </div>
      <div class="caption">{@render t('Clipboard', 50.500)}</div>
    </div>
    <div class="group organize">
      <div class="body">
        {@render big('moveto', 'Move', 26.700, '', 'to', 10.400, true)}
        {@render big('copyto', 'Copy', 25.500, 'copyto', 'to', 10.400, true)}
        <i class="split"></i>
        {@render big('delete', 'Delete', 32.300, '', '', 0, true)}
        {@render big('rename', 'Rename', 40, 'ren')}
      </div>
      <div class="caption">{@render t('Organize', 46.300)}</div>
    </div>
    <div class="group new">
      <div class="body">
        {@render big('newfolder', 'New', 22.500, '', 'folder', 30.800)}
        <div class="col">
          {@render small('newitem', 'New item', 47.500, true)}
          {@render small('easy', 'Easy access', 56.300, true)}
        </div>
      </div>
      <div class="caption">{@render t('New', 22.500)}</div>
    </div>
    <div class="group open">
      <div class="body">
        {@render big('bigprops', 'Properties', 51, 'prop', '', 0, true)}
        <div class="col">
          {@render small('regedit', 'Open', 28.300, true)}
          {@render small('edit', 'Edit', 19.500)}
          {@render small('history', 'History', 36.200)}
        </div>
      </div>
      <div class="caption">{@render t('Open', 28.300)}</div>
    </div>
    <div class="group select">
      <div class="body">
        <div class="col">
          {@render small('selall', 'Select all', 44.500)}
          {@render small('selnone', 'Select none', 59.300)}
          {@render small('selinv', 'Invert selection', 77)}
        </div>
      </div>
      <div class="caption">{@render t('Select', 29.700)}</div>
    </div>
  </section>

  <section class="addressrow">
    <div class="navbtns">
      {@render ico('back', 15, 14)}
      <span class="fw">{@render ico('forward', 15, 14)}</span>
      <span class="rc">{@render ico('chevdown', 8.400, 8)}</span>
      <span class="upb">{@render ico('up', 14, 14)}</span>
    </div>
    <div class="address">
      {@render ico('folder', 14, 16)}
      {#each crumbs as [name, w]}
        <span class="sep">{@render ico('crumb', 5, 8)}</span>
        <span class="crumb">{@render t(name, w)}</span>
      {/each}
      <span class="addrdrop">{@render ico('addrchev', 9.400, 8)}</span>
      <span class="refresh">{@render ico('refresh', 11, 12)}</span>
    </div>
    <div class="find">
      {@render ico('glass', 13, 13)}
      {@render t('Search API Python - Farhan ...', 155)}
    </div>
  </section>

  <main class="middle">
    <aside class="tree">
      {#each tree as n}
        <div class="node" class:root={n.root} class:gap={n.gap} class:on={n.on}>
          {@render ico(n.icon, 16, 16)}
          <span class="label">{@render t(n.label, n.w)}</span>
          {#if n.pin}<span class="pinned">{@render ico('pin', 11.500, 12)}</span>{/if}
        </div>
      {/each}
    </aside>
    <div class="list">
      <div class="head">
        <div class="cell">{@render t('Name', 31.700)}<i class="sort"></i></div>
        <div class="cell">{@render t('Date modified', 74.500)}</div>
        <div class="cell">{@render t('Type', 23.500)}</div>
        <div class="cell">{@render t('Size', 20.700)}</div>
      </div>
      <div class="row">
        <div class="name">{@render ico('regfile', 16, 16)}{@render t('Add_Open_command_window_here_as_...', 220.600)}</div>
        <div class="c2">{@render t('22/05/2023 7:39', 82.200)}</div>
        <div class="c3">{@render t('Registration Entries', 100.700)}</div>
        <div class="c4">{@render t('2 KB', 23)}</div>
      </div>
    </div>
  </main>

  <footer class="status">
    {@render t('1 item', 31.400)}
    <i></i>
    {@render t('1 item selected', 77.500)}
    <span class="size">{@render t('1,64 KB', 36.800)}</span>
    <i></i>
    <div class="views">
      <span class="active">{@render ico('details', 22, 23)}</span>
      <span class="thumb">{@render ico('picture', 16, 16)}</span>
    </div>
  </footer>

  <div class="taskbar">
    <div class="start">{@render ico('win', 16, 16)}</div>
    <div class="tsearch">
      {@render ico('search', 16, 16)}
      {@render t('Search', 43.300, 15)}
      <span class="racket">{@render ico('tennis', 48, 28)}</span>
    </div>
    <div class="app running a1">{@render ico('folder', 14, 16)}{@render t('API Python - Fa...', 90.700)}</div>
    <div class="app">{@render ico('ps', 16, 16)}</div>
    <div class="app running a2">{@render ico('chrome', 16, 16)}{@render t('GitHub - freddy...', 91)}</div>
    <div class="app">{@render ico('vscode', 16, 16)}</div>
    <div class="app">{@render ico('corel', 16, 16)}</div>
    <div class="app">{@render ico('xampp', 16, 16)}</div>
    <div class="app">{@render ico('snip', 16, 16)}</div>
    <div class="app">{@render ico('brave', 14, 16)}</div>
    <div class="app running a3">{@render ico('notepad', 15, 16)}{@render t('step praktikum ...', 90)}</div>
    <div class="app running current">{@render ico('warn', 16, 16)}{@render t('Registry Editor', 75.700)}</div>
    <div class="app">{@render ico('weather', 22, 21)}</div>
    <div class="app">{@render t('33°C', 28.600, 13)}</div>
    <div class="app">{@render ico('traychev', 12, 9)}</div>
    <div class="app">{@render ico('mic', 12, 16)}</div>
    <div class="app low">{@render ico('wifi', 14, 14)}</div>
    <div class="app">{@render ico('battery', 17, 13)}</div>
    <div class="app">{@render ico('volume', 17, 15)}</div>
    <div class="app">{@render t('ENG', 22.600)}</div>
    <div class="app">{@render t('14:04', 26.500)}</div>
    <div class="app">{@render ico('notif', 17, 16.500)}</div>
    <div class="peek"></div>
  </div>

  <div class="dialog" role="dialog">
    <div class="dtitle">{@render t('Registry Editor', 75.800)}</div>
    <div class="dbody">
      {@render ico('warn', 32, 32)}
      <div class="msg">
        {#each message as [line, w]}<p>{@render t(line, w)}</p>{/each}
        <p class="ask">{@render t('Are you sure you want to continue?', 186.700)}</p>
      </div>
    </div>
    <div class="dfoot">
      <button class="yes">{@render t('Yes', 16.500)}</button>
      <button>{@render t('No', 15.200)}</button>
    </div>
  </div>

  <svg class="marks" viewBox="0 0 5693 3201" preserveAspectRatio="none">
    {#each marks as m}
      <text transform="translate({m.x} {m.y}) rotate(-36.050)" x="-3" y="-2" textLength="772" lengthAdjust="spacingAndGlyphs">FARHAN SAEFULAH</text>
    {/each}
  </svg>
</div>

<style>
  :global(body) { margin: 0; background: #24211e; overflow: hidden; }
  .defs { position: absolute; }
  .screen {
    position: relative; zoom: 2.99854; width: 1366px; height: 768px; overflow: hidden;
    display: flex; flex-direction: column;
    background: #191919; color: #fff; font-family: 'Noto Sans', 'Open Sans', sans-serif; font-size: 12px; line-height: 15px;
  }
  .screen * { box-sizing: border-box; }
  .t { white-space: pre; flex: none; line-height: 15px; }
  .ico { display: block; flex: none; overflow: visible; }

  .titlebar { height: 23px; flex: none; display: flex; background: #2b2b2b; border-top: 1px solid #474747; }
  .qat { width: 229px; padding: 2px 0 0 2px; display: flex; align-items: flex-start; }
  .grip { width: 3px; height: 13px; margin: 2px 0 0 6.5px; border: 0.8px solid #777; border-top-color: #555; border-radius: 1px; }
  .grip.last { margin-left: 6.500px; }
  .q1 { margin: 1px 0 0 9.500px; }
  .q2 { margin: 1px 0 0 10px; }
  .q3 { margin: 1px 0 0 6px; }
  .q4 { margin: 7px 0 0 7px; }
  .manage { width: 119px; background: #e8c5f9; color: #2c2233; display: flex; justify-content: center; align-items: flex-start; padding: 1.300px 1px 0 0; }
  .wintitle { flex: 1; padding: 3.300px 0 0 13px; color: #9b9b9b; }
  .controls { display: flex; gap: 35.500px; padding: 4px 20px 0 0; }

  .tabs { height: 23px; flex: none; display: flex; background: #000; }
  .tab { display: flex; align-items: center; padding-top: 1px; }
  .file { width: 56px; padding-left: 19px; background: #00a6b0; color: #001416; }
  .home { width: 58px; padding-left: 14px; background: #202020; }
  .share { width: 72.500px; padding-left: 15px; }
  .view { width: 43px; padding-left: 0.500px; border-right: 0.500px solid #222; }
  .tools { width: 119px; padding-left: 13.500px; border-right: 0.500px solid #222; }
  .tabend { flex: 1; display: flex; justify-content: flex-end; align-items: flex-start; gap: 8.500px; padding: 3px 3px 0 0; }
  .tabend .ico { margin-top: 4.500px; }
  .help { width: 16px; height: 16px; border-radius: 50%; background: #0a6fd0; text-align: center; font-weight: 700; line-height: 16px; font-size: 12px; }

  .ribbon { height: 92.600px; flex: none; display: flex; background: #202020; border-top: 0.800px solid #2b2b2b; border-bottom: 1px solid #2b2b2b; }
  .group { height: 90px; display: flex; flex-direction: column; position: relative; }
  .group::after { content: ''; position: absolute; right: 0; top: 2.500px; width: 0.800px; height: 72px; background: #414141; }
  .body { height: 74.400px; display: flex; }
  .caption { text-align: center; color: #c3c3c3; }
  .clipboard { width: 263px; padding-left: 5.500px; }
  .clipboard .caption { padding-right: 7px; }
  .organize { width: 191px; padding-left: 3px; }
  .new { width: 145px; padding-left: 3px; }
  .open { width: 133px; padding-left: 3px; }
  .select { width: 115px; padding-left: 0; }
  .organize .caption, .new .caption, .open .caption { padding-right: 7px; }
  .select .caption { padding-right: 2.500px; }
  .big { width: 43px; padding-top: 7.200px; display: flex; flex-direction: column; align-items: center; }
  .pinq { width: 66.500px; }
  .copyto { margin-left: -1px; }
  .ren { width: 45px; }
  .prop { width: 59px; }
  .prop .line, .copyto .line { padding-right: 0.800px; }
  .dim { color: #bdbdbd; }
  .line { height: 14px; margin-top: 2.800px; display: flex; align-items: center; justify-content: center; }
  .line.second { margin-top: -0.500px; gap: 4px; }
  .arrow { border: 2.900px solid transparent; border-top: 3.600px solid #dcdcdc; border-bottom: 0; width: 0; height: 0; }
  .split { width: 1px; height: 55px; margin: 9px 2.500px 0 4px; background: #4a4a4a; }
  .col { padding-top: 4.200px; }
  .small { height: 22px; display: flex; align-items: center; gap: 3px; }
  .small .arrow { margin-left: 1.200px; }
  .clipboard .col { padding-left: 2.300px; }
  .new .col { padding-left: 3px; }
  .open .col { padding-left: 2px; }
  .select .col { padding-left: 7.200px; }

  .addressrow { height: 42.400px; flex: none; display: flex; align-items: center; padding-bottom: 1.600px; }
  .navbtns { width: 106px; display: flex; align-items: center; padding: 0 0 0.800px 11.600px; }
  .fw { margin-left: 15px; }
  .rc { margin-left: 11.500px; }
  .upb { margin-left: 9.600px; }
  .address { width: 1034px; height: 30px; border: 1px solid #535353; display: flex; align-items: center; padding-left: 4px; }
  .address .t, .find .t { padding-bottom: 1px; }
  .sep { margin: 0 9px 0 8px; }
  .crumb + .sep { margin-left: 7.600px; }
  .crumb { display: flex; }
  .addrdrop { margin-left: auto; margin-right: 10px; }
  .refresh { border-left: 0.500px solid #101010; height: 28px; width: 29.500px; display: flex; align-items: center; justify-content: center; }
  .find { margin-left: 12px; width: 202px; height: 30px; border: 1px solid #535353; color: #8b8b8b; display: flex; align-items: center; padding-left: 14px; gap: 13.200px; }

  .middle { flex: 1; display: flex; min-height: 0; }
  .tree { width: 154px; padding-top: 15.700px; border-right: 0.500px solid #141414; }
  .node { height: 24px; display: flex; align-items: center; padding-left: 32px; }
  .node.root { padding-left: 24px; }
  .node.gap { margin-top: 8px; }
  .node.on { height: 22px; margin: 1px 2.500px 1px 1px; padding-left: 31px; background: #333; }
  .label { margin-left: 5.200px; width: 99.500px; height: 22px; overflow: hidden; display: flex; align-items: center; padding-bottom: 1px; }
  .root .label { width: 107.500px; }
  .pinned { margin-left: -13.700px; }
  .list { flex: 1; background: #202020; border-left: 1px solid #2b2b2b; }
  .head { height: 25px; display: grid; grid-template-columns: 273px 144px 120px 80px; color: #dedede; }
  .cell { display: flex; align-items: center; padding-left: 6.800px; position: relative; border-right: 0.800px solid #5e5e5e; }
  .cell:first-child { padding-left: 18.300px; }
  .sort { position: absolute; left: 140px; top: 2.200px; width: 5.500px; height: 5.500px; border: 0.800px solid #aaa; border-right: 0; border-bottom: 0; transform: rotate(45deg); }
  .row { margin: 7px 0 0 16px; width: 596px; height: 20px; background: #333; display: grid; grid-template-columns: 262.800px 144px 163px 24px; align-items: center; color: #dcdcdc; }
  .row .t { display: block; padding-bottom: 1.200px; }
  .name { display: flex; align-items: center; gap: 4.500px; padding-left: 3px; color: #fff; }

  .status { height: 23px; flex: none; background: #333; display: flex; align-items: center; padding-left: 14px; color: #e6e6e6; }
  .status i { width: 0.800px; height: 12px; margin: 0 10.500px; background: #fff; }
  .status .size { margin-left: 5.500px; }
  .status .size + i { margin-left: 9.500px; }
  .views { margin-left: auto; height: 23px; display: flex; align-items: center; padding-right: 7px; }
  .active { background: #666; height: 23px; box-shadow: inset 0 0 0 0.800px #838383; }
  .thumb { margin-left: 3.500px; padding-bottom: 2px; }

  .taskbar {
    height: 30px; flex: none; display: grid; align-items: stretch;
    grid-template-columns: 36px 265px 132px 30px 132px 35px 35px 35px 35px 29px 122px 159px 30px 49px 24px 24px 22px 24px 25px 37px 45px 36px 5px;
    background: linear-gradient(90deg, #23201d 0, #24201d 22%, #2c221d 30%, #33271f 45%, #33271f 58%, #2a221d 64%, #23201d 76%, #211e1c 100%);
  }
  .start { display: flex; align-items: center; padding-left: 10px; }
  .tsearch { width: 258px; background: #333; border: 1px solid #5b5b5b; display: flex; align-items: center; padding-left: 11.500px; color: #d7d7d7; }
  .tsearch .t { margin-left: 12px; line-height: 18px; }
  .racket { margin-left: auto; margin-right: 5px; height: 28px; overflow: hidden; }
  .app { display: flex; align-items: center; }
  .app .t { padding-bottom: 1px; }
  .running { position: relative; gap: 4px; }
  .running::after { content: ''; position: absolute; left: 0; right: 0; bottom: 0; height: 2px; background: #88e6ea; }
  .a1 { width: 118px; padding-left: 5px; }
  .a2 { width: 118px; padding-left: 3px; }
  .a3 { width: 117.500px; padding-left: 4px; }
  .current { width: 125px; padding-left: 7px; background: linear-gradient(90deg, #55504c, #4a4946); gap: 3.500px; }
  .low { padding-top: 2px; }
  .peek { border-left: 0.800px solid #8a8a8a; }

  .dialog {
    position: absolute; left: 397.500px; top: 231px; width: 555.500px; height: 206px; background: #fff; color: #0c0c0c;
    display: flex; flex-direction: column; box-shadow: 0 0 0 0.500px #555, 0 5px 14px rgba(0, 0, 0, 0.450);
  }
  .dtitle { height: 40px; padding: 7px 0 0 7.500px; }
  .dbody { flex: 1; display: flex; padding-left: 9.700px; }
  .msg { padding: 4.900px 0 0 10.200px; }
  .msg p { margin: 0; height: 15px; display: flex; }
  .msg .ask { margin: 15px 0 0 2.800px; }
  .dfoot { height: 41px; background: #f0f0f0; border-top: 0.800px solid #dfdfdf; display: flex; justify-content: flex-end; gap: 8px; padding: 9px 11px 0 0; }
  button { width: 66px; height: 21.500px; padding: 0; background: #e1e1e1; border: 1px solid #adadad; color: #0c0c0c; font: inherit; display: flex; align-items: center; justify-content: center; }
  .yes { border: 1.800px solid #0078d7; }

  .marks { position: absolute; inset: 0; width: 100%; height: 100%; pointer-events: none; opacity: 0.200; }
  .marks text { font: 900 94.500px Roboto, 'Open Sans', sans-serif; word-spacing: 8px; fill: #9ea8a3; stroke: #9ea8a3; stroke-width: 4px; }
  .pstext { font: 700 8.500px 'Noto Sans', sans-serif; fill: #8fc3fb; }
</style>
